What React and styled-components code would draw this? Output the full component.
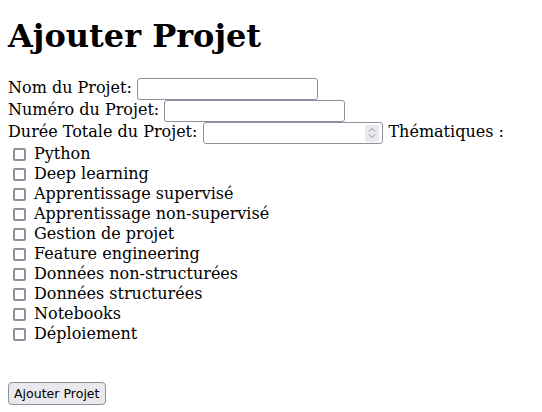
import React from "react";
import styled, { createGlobalStyle } from "styled-components";

const Global = createGlobalStyle`
  html, body {
    margin: 0;
    padding: 0;
    background: #fff;
  }
  body {
    font-family: "DejaVu Serif", serif;
    font-size: 16px;
    color: #000;
  }
`;

const Page = styled.div`
  padding: 8px;
`;

const Title = styled.h1`
  font-size: 32px;
  font-weight: bold;
  line-height: 37px;
  margin: 10px 0 23px;
`;

const Form = styled.form`
  display: flex;
  flex-direction: column;
`;

const FieldLine = styled.div`
  display: flex;
  align-items: flex-start;
  height: 22px;
`;

const Label = styled.label`
  line-height: ${(p) => p.$lh || 20}px;
  white-space: nowrap;
`;

const TextInput = styled.input`
  box-sizing: border-box;
  width: 181px;
  height: 22px;
  margin: 0 0 0 5px;
  padding: 0 4px;
  border: 1px solid #8f8f9d;
  border-radius: 3px;
  background: #fff;
  font: 13px "DejaVu Sans", sans-serif;
  outline: none;
`;

const NumberField = styled.div`
  box-sizing: border-box;
  display: flex;
  align-items: center;
  width: 180px;
  height: 22px;
  margin: 0 5px 0 6px;
  border: 1px solid #8f8f9d;
  border-radius: 3px;
  background: #fff;
`;

const NumberInput = styled.input`
  flex: 1;
  min-width: 0;
  height: 100%;
  border: none;
  padding: 0 4px;
  background: transparent;
  font: 13px "DejaVu Sans", sans-serif;
  outline: none;
  -moz-appearance: textfield;
  &::-webkit-inner-spin-button,
  &::-webkit-outer-spin-button {
    -webkit-appearance: none;
    margin: 0;
  }
`;

const Spinner = styled.span`
  display: flex;
  align-items: center;
  justify-content: center;
  width: 14px;
  height: 17px;
  margin-right: 3px;
  border-radius: 2px;
  background: #e9e9ed;
`;

const ThemeRow = styled.div`
  display: flex;
  align-items: flex-start;
  height: 20px;
`;

const Check = styled.input`
  appearance: none;
  -webkit-appearance: none;
  box-sizing: border-box;
  width: 13px;
  height: 13px;
  margin: 4px 3px 0 5px;
  border: 2px solid #8f8f9d;
  border-radius: 2px;
  background: #fff;
  flex-shrink: 0;
  & + label {
    margin-left: 5px;
  }
`;

const Spacer = styled.div`
  height: ${(p) => p.$h}px;
`;

const SubmitButton = styled.button`
  align-self: flex-start;
  box-sizing: border-box;
  height: 23px;
  padding: 3px 5px;
  border: 1px solid #8f8f9d;
  border-radius: 4px;
  background: #e9e9ed;
  color: #000;
  font-family: "DejaVu Sans", sans-serif;
  font-size: 12.55px;
  line-height: 15px;
  white-space: nowrap;
`;

const themes = [
  "Python",
  "Deep learning",
  "Apprentissage supervisé",
  "Apprentissage non-supervisé",
  "Gestion de projet",
  "Feature engineering",
  "Données non-structurées",
  "Données structurées",
  "Notebooks",
  "Déploiement",
];

function SpinIcon() {
  return (
    <svg width="8" height="12" viewBox="0 0 8 12" fill="none">
      <path d="M1 4.5 L4 1.5 L7 4.5" stroke="#8f8f9d" strokeWidth="1" />
      <path d="M1 7.5 L4 10.5 L7 7.5" stroke="#8f8f9d" strokeWidth="1" />
    </svg>
  );
}

export default function App() {
  return (
    <Page>
      <Global />
      <Title>Ajouter Projet</Title>
      <Form onSubmit={(e) => e.preventDefault()}>
        <FieldLine>
          <Label htmlFor="nom">Nom du Projet:</Label>
          <TextInput id="nom" type="text" />
        </FieldLine>
        <FieldLine>
          <Label htmlFor="num">Numéro du Projet:</Label>
          <TextInput id="num" type="text" />
        </FieldLine>
        <FieldLine>
          <Label htmlFor="duree">Durée Totale du Projet:</Label>
          <NumberField>
            <NumberInput id="duree" type="number" />
            <Spinner>
              <SpinIcon />
            </Spinner>
          </NumberField>
          <Label>Thématiques :</Label>
        </FieldLine>
        {themes.map((t) => (
          <ThemeRow key={t}>
            <Check type="checkbox" id={t} />
            <Label htmlFor={t} $lh={20}>
              {t}
            </Label>
          </ThemeRow>
        ))}
        <Spacer $h={38} />
        <SubmitButton type="submit">Ajouter Projet</SubmitButton>
      </Form>
    </Page>
  );
}
